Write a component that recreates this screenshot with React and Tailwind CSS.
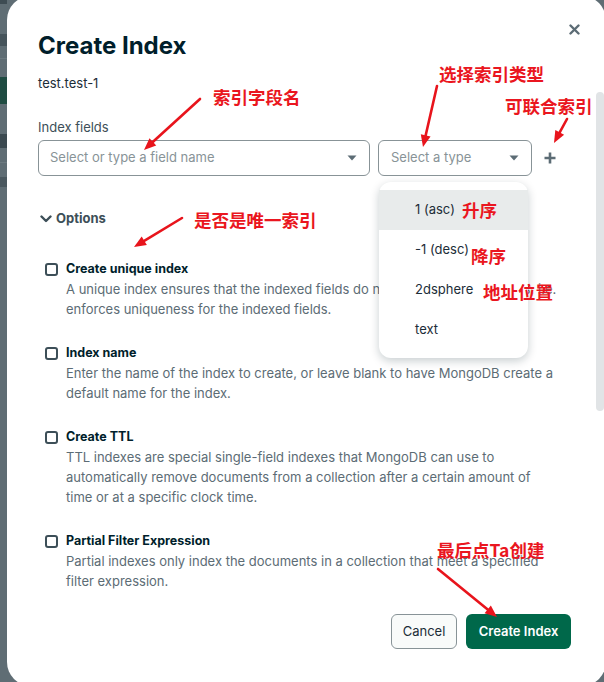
import React from "react";

const FONT = { fontFamily: "Inter, 'Noto Sans', sans-serif" };
const CJK = { fontFamily: "'Noto Sans CJK SC', 'Noto Sans', sans-serif" };

function Arrow({ x1, y1, x2, y2 }) {
  const dx = x2 - x1;
  const dy = y2 - y1;
  const len = Math.hypot(dx, dy);
  const ux = dx / len;
  const uy = dy / len;
  const hl = 12;
  const hw = 5;
  const bx = x2 - ux * hl;
  const by = y2 - uy * hl;
  const px = -uy;
  const py = ux;
  const pts = `${x2},${y2} ${bx + px * hw},${by + py * hw} ${bx - px * hw},${by - py * hw}`;
  return (
    <g>
      <line x1={x1} y1={y1} x2={bx + ux * 2} y2={by + uy * 2} stroke="#e8141c" strokeWidth="2.6" strokeLinecap="round" />
      <polygon points={pts} fill="#e8141c" />
    </g>
  );
}

function Caret() {
  return (
    <svg width="10" height="6" viewBox="0 0 10 6">
      <path d="M0.5 0.5 L9.5 0.5 L5 5.5 Z" fill="#5c6c75" />
    </svg>
  );
}

function Opt({ title, lines }) {
  return (
    <div className="flex pl-[7px]">
      <div className="mt-[4px] h-[13px] w-[13px] shrink-0 rounded-[3px] border-2 border-[#3d4f58]" />
      <div className="ml-[8px]">
        <div className="text-[12.5px] font-bold leading-[20px] text-[#001e2b]">{title}</div>
        <div className="text-[13px] leading-[20px] text-[#5c6c75]">
          {lines.map((l, i) => (
            <div key={i} className="whitespace-nowrap">{l}</div>
          ))}
        </div>
      </div>
    </div>
  );
}

function Note({ children, className }) {
  return (
    <div
      className={"absolute whitespace-nowrap text-[17.5px] font-bold leading-none text-[#ea1620] " + className}
      style={CJK}
    >
      {children}
    </div>
  );
}

export default function App() {
  return (
    <div className="relative flex h-[682px] w-[604px] overflow-hidden bg-[#5f6d74]" style={FONT}>
      {/* backdrop strip */}
      <div className="flex w-[7px] shrink-0 flex-col">
        <div className="h-[4px] bg-[#3e4c53]" />
        <div className="mt-[30px] h-[12px] bg-[#46545b]" />
        <div className="mt-[12px] h-px bg-[#6c7a80]" />
        <div className="mt-[18px] h-[27px] bg-[#1f4c42]" />
        <div className="mt-[30px] h-[14px] bg-[#3b4950]" />
        <div className="mt-[14px] h-px bg-[#6c7a80]" />
        <div className="mt-[14px] h-[10px] bg-[#4a585f]" />
      </div>

      {/* modal */}
      <div className="relative -mt-[4px] flex h-[690px] w-[599px] shrink-0 rounded-[24px] bg-white">
        <button className="absolute left-[560px] top-[26px] flex h-[14px] w-[14px] items-center justify-center">
          <svg width="11" height="11" viewBox="0 0 11 11">
            <path d="M1.5 1.5 L9.5 9.5 M9.5 1.5 L1.5 9.5" stroke="#5c6c75" strokeWidth="2.4" strokeLinecap="round" />
          </svg>
        </button>

        <div className="flex flex-1 flex-col pl-[31px] pr-[25px] pt-[34px]">
          <div className="text-[24px] font-bold leading-[32px] text-[#001e2b]">Create Index</div>
          <div className="mt-[11px] text-[13px] leading-[20px] text-[#1c2d38]">test.test-1</div>
          <div className="mt-[24px] text-[13px] leading-[20px] text-[#3d4f58]">Index fields</div>
          <div className="mt-[3px] flex items-center">
            <div className="flex h-[36px] w-[332px] items-center justify-between rounded-[6px] border border-[#889397] pl-[11px] pr-[12px]">
              <span className="text-[13px] text-[#889397]">Select or type a field name</span>
              <Caret />
            </div>
            <div className="ml-[8px] flex h-[36px] w-[154px] items-center justify-between rounded-[6px] border border-[#889397] pl-[12px] pr-[12px]">
              <span className="text-[13px] text-[#889397]">Select a type</span>
              <Caret />
            </div>
            <div className="ml-[12px] flex h-[12px] w-[12px] items-center justify-center">
              <svg width="12" height="12" viewBox="0 0 12 12">
                <path d="M6 0.5 V11.5 M0.5 6 H11.5" stroke="#5c6c75" strokeWidth="2.6" />
              </svg>
            </div>
          </div>

          <div className="mt-[33px] flex h-[20px] items-center">
            <svg width="12" height="8" viewBox="0 0 12 8" className="ml-[2px]">
              <path d="M1.5 1.5 L6 6 L10.5 1.5" stroke="#3d4f58" strokeWidth="2.4" fill="none" strokeLinecap="round" strokeLinejoin="round" />
            </svg>
            <span className="ml-[4px] text-[13px] font-bold text-[#3d4f58]">Options</span>
          </div>

          <div className="mt-[30px] flex flex-col gap-[24px]">
            <Opt
              title="Create unique index"
              lines={[
                "A unique index ensures that the indexed fields do not store duplicate values; i.e.",
                "enforces uniqueness for the indexed fields.",
              ]}
            />
            <Opt
              title="Index name"
              lines={[
                "Enter the name of the index to create, or leave blank to have MongoDB create a",
                "default name for the index.",
              ]}
            />
            <Opt
              title="Create TTL"
              lines={[
                "TTL indexes are special single-field indexes that MongoDB can use to",
                "automatically remove documents from a collection after a certain amount of",
                "time or at a specific clock time.",
              ]}
            />
            <Opt
              title="Partial Filter Expression"
              lines={[
                "Partial indexes only index the documents in a collection that meet a specified",
                "filter expression.",
              ]}
            />
          </div>

          <div className="mt-[23px] flex justify-end gap-[9px]">
            <button className="flex h-[35px] w-[66px] items-center justify-center rounded-[6px] border border-[#889397] bg-[#f9fbfa] text-[13px] text-[#1c2d38]">
              Cancel
            </button>
            <button className="flex h-[35px] w-[105px] items-center justify-center rounded-[6px] bg-[#00684a] text-[13px] font-semibold text-white">
              Create Index
            </button>
          </div>
        </div>

        <div className="mr-[2px] w-[8px] shrink-0 pt-[96px]">
          <div className="h-[319px] rounded-full bg-[#e1e4e6]" />
        </div>
      </div>

      {/* dropdown menu */}
      <div className="absolute left-[379px] top-[182px] w-[149px] rounded-[12px] bg-white py-[8px] shadow-[0_3px_10px_rgba(0,30,43,0.22)]">
        {["1 (asc)", "-1 (desc)", "2dsphere", "text"].map((t, i) => (
          <div
            key={t}
            className={
              "flex h-[40px] items-center pl-[36px] text-[13px] text-[#1c2d38] " + (i === 0 ? "bg-[#e8ebeb]" : "")
            }
          >
            {t}
          </div>
        ))}
      </div>

      {/* annotations */}
      <svg className="pointer-events-none absolute left-0 top-0" width="604" height="682">
        <Arrow x1={200} y1={99} x2={144} y2={150} />
        <Arrow x1={437} y1={86} x2={423} y2={147} />
        <Arrow x1={567} y1={119} x2={554} y2={143} />
        <Arrow x1={182} y1={218} x2={134} y2={247} />
        <Arrow x1={438} y1={569} x2={497} y2={617} />
      </svg>
      <Note className="left-[213px] top-[88px]">索引字段名</Note>
      <Note className="left-[439px] top-[65px]">选择索引类型</Note>
      <Note className="left-[505px] top-[97px]">可联合索引</Note>
      <Note className="left-[194px] top-[211px]">是否是唯一索引</Note>
      <Note className="left-[462px] top-[201px]">升序</Note>
      <Note className="left-[471px] top-[247px]">降序</Note>
      <Note className="left-[483px] top-[283px]">地址位置</Note>
      <Note className="left-[437px] top-[541px]">最后点Ta创建</Note>
    </div>
  );
}
